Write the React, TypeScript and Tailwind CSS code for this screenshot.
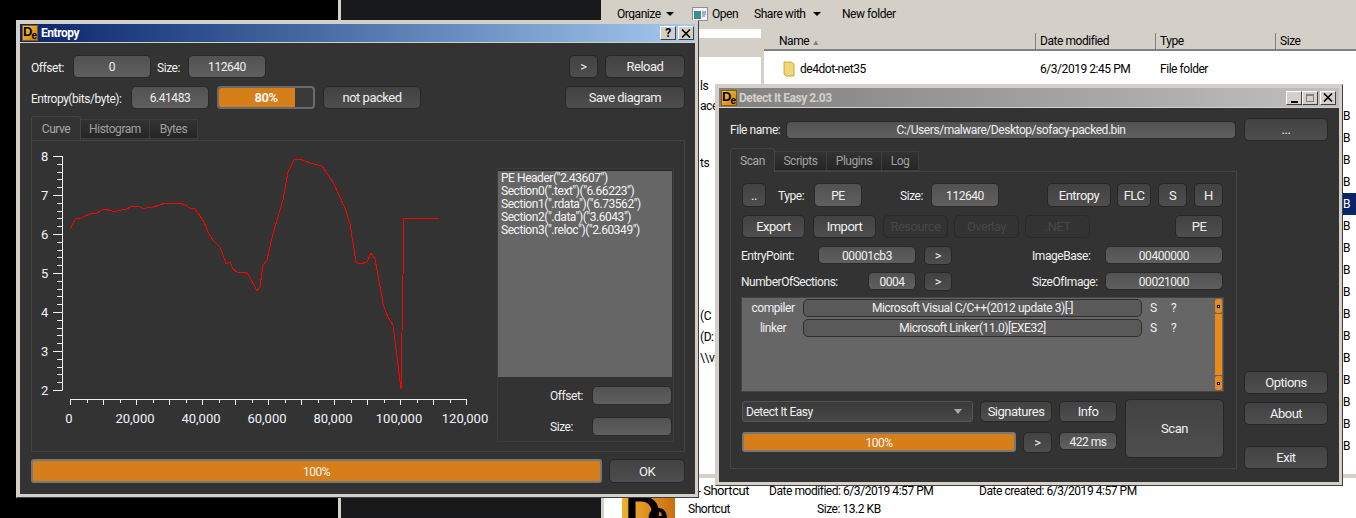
import type { ReactNode } from 'react'

const font = "font-['Roboto','Liberation_Sans',sans-serif] tracking-[-0.45px]"

const curve = [
  [70, 229], [73, 223], [76, 219], [81, 218], [85, 216], [90, 214], [97, 213], [102, 210], [105, 209], [112, 211],
  [117, 211], [122, 210], [127, 209], [130, 207], [137, 206], [140, 207], [144, 209], [148, 207], [153, 207], [160, 205],
  [165, 203], [173, 203], [180, 203], [185, 205], [190, 208], [195, 209], [200, 216], [204, 222], [209, 234], [213, 240],
  [220, 247], [223, 255], [226, 264], [230, 262], [233, 269], [237, 272], [245, 272], [248, 274], [257, 291], [260, 287],
  [263, 265], [267, 260], [272, 238], [277, 220], [283, 200], [288, 172], [294, 160], [300, 159], [310, 163], [322, 166],
  [333, 182], [340, 197], [345, 208], [350, 224], [356, 262], [360, 264], [367, 262], [371, 253], [375, 259], [382, 297],
  [383, 304], [388, 317], [393, 325], [401, 389], [402, 332], [403, 275], [404, 218], [439, 218],
]

function Logo() {
  return (
    <div className="relative h-4 w-4 shrink-0 overflow-hidden border border-[#8a5a10] bg-gradient-to-br from-[#f7c935] to-[#d07a10] font-['Liberation_Sans',sans-serif] font-bold tracking-normal text-black">
      <span className="absolute top-[-1px] left-0 text-[13px] leading-none">D</span>
      <span className="absolute right-0 bottom-[-1px] text-[10px] leading-none">e</span>
    </div>
  )
}

function BigLogo() {
  return (
    <div className="relative h-[60px] w-[53px] shrink-0 overflow-hidden bg-gradient-to-r from-[#f0b030] to-[#c96e12] font-['Liberation_Sans',sans-serif] font-bold tracking-normal text-black">
      <span className="absolute top-[-8px] left-[3px] text-[50px] leading-none">D</span>
      <span className="absolute top-0 left-[25px] text-[38px] leading-none">e</span>
    </div>
  )
}

function Btn({ className = '', children, off }: { className?: string; children?: ReactNode; off?: boolean }) {
  return (
    <div className={`flex shrink-0 items-center justify-center rounded-[5px] border pt-[1px] text-[13px] tracking-[-0.5px] whitespace-nowrap ${off
      ? 'border-[#2a2a2a] bg-[#333333] text-[#474747]'
      : 'border-[#272727] bg-gradient-to-b from-[#424242] to-[#4e4e4e] text-[#f0f0f0]'} ${className}`}>
      {children}
    </div>
  )
}

function Field({ className = '', children }: { className?: string; children?: ReactNode }) {
  return (
    <div className={`flex shrink-0 items-center justify-center rounded-[5px] border border-[#2a2a2a] bg-gradient-to-b from-[#525252] to-[#5f5f5f] pt-[1px] text-[12px] whitespace-nowrap text-[#f0f0f0] ${className}`}>
      {children}
    </div>
  )
}

function Label({ className = '', children }: { className?: string; children: ReactNode }) {
  return <span className={`shrink-0 whitespace-nowrap ${className}`}>{children}</span>
}

function Bar({ className = '', pct = '100%' }: { className?: string; pct?: string }) {
  return (
    <div className={`flex shrink-0 items-center justify-center rounded-[3px] border-2 border-[#777777] bg-[#d67e19] pt-[1px] text-[12px] text-[#f5f5f5] ${className}`}>
      {pct}
    </div>
  )
}

function Tab({ label, active, className = '' }: { label: string; active?: boolean; className?: string }) {
  return (
    <div className={active
      ? `flex h-6 items-center justify-center rounded-t-[3px] border border-b-0 border-[#444444] bg-[#333333] text-[12px] text-[#aaaaaa] ${className}`
      : `mt-[3px] flex h-[20px] items-center justify-center border border-l-0 border-[#3e3e3e] bg-gradient-to-b from-[#333333] to-[#252525] text-[12px] text-[#a0a0a0] ${className}`}>
      {label}
    </div>
  )
}

function CapBtn({ children, className = '' }: { children: ReactNode; className?: string }) {
  return (
    <div className={`flex h-[14px] w-4 items-center justify-center border border-t-white border-l-white border-r-[#404040] border-b-[#404040] bg-[#d4d0c8] ${className}`}>
      {children}
    </div>
  )
}

function CloseGlyph() {
  return (
    <svg viewBox="0 0 10 9" className="h-[9px] w-[10px]" stroke="black" strokeWidth="1.6" fill="none">
      <path d="M1 0.5 9 8.5M9 0.5 1 8.5" />
    </svg>
  )
}

function Chart() {
  const yTicks = Array.from({ length: 31 }, (_, i) => i)
  const xTicks = Array.from({ length: 25 }, (_, i) => i)
  return (
    <svg viewBox="32 141 465 310" className="h-[310px] w-[465px] shrink-0 tracking-normal">
      <path d="M62.5 156V390.5" stroke="#f0f0f0" fill="none" />
      {yTicks.map(i => {
        const y = Math.round(156 + i * 7.8) + 0.5
        return <path key={i} d={`M${i % 5 === 0 ? 53 : 57} ${y}H62`} stroke="#f0f0f0" />
      })}
      {[8, 7, 6, 5, 4, 3, 2].map((n, i) => (
        <text key={n} x="41" y={161 + i * 39} fontSize="13" fill="#f0f4ff">{n}</text>
      ))}
      <path d="M70 399.5H466.5" stroke="#f0f0f0" />
      {xTicks.map(i => {
        const x = Math.round(70 + i * 16.5) + 0.5
        return <path key={i} d={`M${x} 399V${i % 2 === 0 ? 405 : 403}`} stroke="#f0f0f0" />
      })}
      {['0', '20,000', '40,000', '60,000', '80,000', '100,000', '120,000'].map((t, i) => (
        <text key={t} x={69 + i * 66} y="423" fontSize="13" textAnchor="middle" fill="#f0f4ff">{t}</text>
      ))}
      <polyline points={curve.map(p => p.join(',')).join(' ')} fill="none" stroke="#ff0000" strokeWidth="1" shapeRendering="crispEdges" />
    </svg>
  )
}

function EntropyWindow() {
  const sections = [
    'PE Header("2.43607")',
    'Section0(".text")("6.66223")',
    'Section1(".rdata")("6.73562")',
    'Section2(".data")("3.6043")',
    'Section3(".reloc")("2.60349")',
  ]
  return (
    <div className="absolute top-5 left-4 h-[478px] w-[683px] border border-[#d4d0c8] border-r-[#404040] border-b-[#404040] bg-[#d4d0c8] p-[3px]">
      <div className="flex h-[18px] items-center bg-gradient-to-r from-[#0a246a] to-[#a6caf0] pr-[1px] pl-[2px]">
        <Logo />
        <span className="ml-[3px] text-[12px] font-bold text-white">Entropy</span>
        <div className="ml-auto flex gap-[2px]">
          <CapBtn><span className="text-[12px] leading-none font-bold text-black">?</span></CapBtn>
          <CapBtn><CloseGlyph /></CapBtn>
        </div>
      </div>
      <div className="mt-[1px] h-[451px] bg-[#333333] pt-3 pr-[10px] pl-[11px] text-[12px] text-[#f0f0f0]">
        <div className="flex h-[23px] items-center">
          <Label className="w-[42px] pt-[2px]">Offset:</Label>
          <Field className="h-[23px] w-[78px]">0</Field>
          <Label className="ml-[6px] w-[31px] pt-[2px]">Size:</Label>
          <Field className="h-[23px] w-[78px]">112640</Field>
          <Btn className="ml-auto h-[23px] w-[29px]">&gt;</Btn>
          <Btn className="ml-[7px] h-[23px] w-[80px]">Reload</Btn>
        </div>
        <div className="mt-2 flex h-[23px] items-center">
          <Label className="w-[100px] pt-[2px]">Entropy(bits/byte):</Label>
          <Field className="h-[23px] w-[78px]">6.41483</Field>
          <div className="relative ml-2 flex h-[23px] w-[98px] overflow-hidden rounded-[4px] border-2 border-[#6a6a6a] bg-[#3a3a3a]">
            <div className="w-[76px] bg-[#d67e19]" />
            <span className="absolute inset-0 flex items-center justify-center text-[13px] font-bold text-[#f5f5f5]">80%</span>
          </div>
          <Btn className="ml-2 h-[23px] w-[98px] text-[12px]">not packed</Btn>
          <Btn className="ml-auto h-[23px] w-[120px]">Save diagram</Btn>
        </div>
        <div className="mt-[7px] flex h-6">
          <Tab label="Curve" active className="w-[50px]" />
          <Tab label="Histogram" className="w-[69px]" />
          <Tab label="Bytes" className="w-[48px]" />
        </div>
        <div className="flex h-[312px] border border-[#444444]">
          <Chart />
          <div className="mt-[27px] h-[274px] w-[177px] border border-[#3c3c3c]">
            <div className="mt-[1px] h-[207px] w-[174px] border-t border-[#2a2a2a] bg-[#666666] pt-[1px] pl-[3px] text-[12px] leading-[13px] text-[#f5f5f5]">
              {sections.map(s => <div key={s}>{s}</div>)}
            </div>
            <div className="mt-[9px] flex h-[19px] w-[174px] items-center justify-between pl-[52px]">
              <span>Offset:</span>
              <Field className="h-[19px] w-[80px]" />
            </div>
            <div className="mt-3 flex h-[19px] w-[174px] items-center justify-between pl-[52px]">
              <span>Size:</span>
              <Field className="h-[19px] w-[80px]" />
            </div>
          </div>
        </div>
        <div className="mt-[7px] flex h-6 justify-between">
          <Bar className="h-6 w-[571px]" />
          <Btn className="h-6 w-[76px]">OK</Btn>
        </div>
      </div>
    </div>
  )
}

function ScrollCap() {
  return (
    <div className="flex h-[14px] w-[7px] items-center justify-center rounded-[2px] bg-[#e8891c]">
      <div className="h-[3px] w-[3px] border border-black bg-white" />
    </div>
  )
}

function DetectRow({ name, value }: { name: string; value: string }) {
  return (
    <div className="flex h-[18px] items-center text-[12px] text-[#f0f0f0]">
      <span className="w-[60px] text-center">{name}</span>
      <div className="flex h-[18px] w-[339px] items-center justify-center rounded-[5px] border border-[#2e2e2e] bg-[#595959]">{value}</div>
      <span className="ml-2 w-[21px]">S</span>
      <span>?</span>
    </div>
  )
}

function DieWindow() {
  return (
    <div className="absolute top-[84px] left-[715px] h-[402px] w-[628px] border border-[#d4d0c8] border-r-[#404040] border-b-[#404040] bg-[#d4d0c8] p-[3px]">
      <div className="flex h-[19px] items-center bg-gradient-to-r from-[#808080] to-[#c0c0c0] pr-[3px] pl-[2px]">
        <Logo />
        <span className="ml-[2px] text-[12px] font-bold text-[#d4d0c8]">Detect It Easy 2.03</span>
        <div className="ml-auto flex">
          <CapBtn className="items-end pb-[1px]"><div className="h-[2px] w-[7px] bg-black" /></CapBtn>
          <CapBtn><div className="h-2 w-2 border border-t-2 border-[#808080]" /></CapBtn>
          <CapBtn className="ml-[2px]"><CloseGlyph /></CapBtn>
        </div>
      </div>
      <div className="mt-[1px] flex h-[374px] bg-[#333333] pt-[10px] pl-[11px] text-[12px] text-[#f0f0f0]">
        <div className="w-[507px]">
          <div className="flex h-[23px] items-center">
            <Label className="w-[56px]">File name:</Label>
            <Field className="h-[18px] w-[450px]">C:/Users/malware/Desktop/sofacy-packed.bin</Field>
          </div>
          <div className="mt-[6px] flex h-6 pt-[1px]">
            <Tab label="Scan" active className="w-[45px]" />
            <Tab label="Scripts" className="w-[52px]" />
            <Tab label="Plugins" className="w-[55px]" />
            <Tab label="Log" className="w-[37px]" />
          </div>
          <div className="h-[298px] border border-[#444444] pt-[11px] pl-[11px]">
            <div className="flex h-6 items-center">
              <Btn className="h-6 w-6">..</Btn>
              <Label className="ml-3 w-9 pt-[2px]">Type:</Label>
              <Field className="h-6 w-12">PE</Field>
              <Label className="ml-[38px] w-[31px] pt-[2px]">Size:</Label>
              <Field className="h-6 w-[68px]">112640</Field>
              <Btn className="ml-12 h-6 w-16">Entropy</Btn>
              <Btn className="ml-[6px] h-6 w-[34px]">FLC</Btn>
              <Btn className="ml-[7px] h-6 w-[29px]">S</Btn>
              <Btn className="ml-[7px] h-6 w-[29px]">H</Btn>
            </div>
            <div className="mt-2 flex h-[23px]">
              <Btn className="w-[63px]">Export</Btn>
              <Btn className="ml-2 w-[63px]">Import</Btn>
              <Btn off className="ml-[7px] w-[65px]">Resource</Btn>
              <Btn off className="ml-[6px] w-[65px]">Overlay</Btn>
              <Btn off className="ml-[6px] w-[65px]">.NET</Btn>
              <Btn className="ml-[85px] w-12">PE</Btn>
            </div>
            <div className="mt-2 flex h-[19px] items-start">
              <Label className="ml-[-1px] w-[77px] pt-[1px]">EntryPoint:</Label>
              <Field className="h-[18px] w-[98px]">00001cb3</Field>
              <Btn className="ml-2 h-[19px] w-7">&gt;</Btn>
              <Label className="ml-20 w-[73px] pt-[1px]">ImageBase:</Label>
              <Field className="h-[18px] w-[118px]">00400000</Field>
            </div>
            <div className="mt-[7px] flex h-[19px] items-start">
              <Label className="ml-[-1px] w-[127px] pt-[1px]">NumberOfSections:</Label>
              <Field className="h-[18px] w-12">0004</Field>
              <Btn className="ml-2 h-[19px] w-7">&gt;</Btn>
              <Label className="ml-20 w-[73px] pt-[1px]">SizeOfImage:</Label>
              <Field className="h-[18px] w-[118px]">00021000</Field>
            </div>
            <div className="mt-[6px] ml-[-1px] flex h-[95px] w-[483px] justify-between border border-[#444444] bg-[#666666] pt-[1px] pl-[1px]">
              <div className="flex flex-col gap-[2px]">
                <DetectRow name="compiler" value="Microsoft Visual C/C++(2012 update 3)[-]" />
                <DetectRow name="linker" value="Microsoft Linker(11.0)[EXE32]" />
              </div>
              <div className="mr-[1px] flex flex-col gap-[1px]">
                <ScrollCap />
                <div className="h-[61px] w-[7px] bg-[#e8891c]" />
                <ScrollCap />
              </div>
            </div>
            <div className="mt-[7px] flex">
              <div className="w-[375px] pt-[2px]">
                <div className="flex h-[21px]">
                  <div className="flex w-[231px] items-center justify-between rounded-[3px] border border-[#555555] bg-gradient-to-b from-[#3a3a3a] to-[#484848] pr-[10px] pl-[3px]">
                    <span>Detect It Easy</span>
                    <svg viewBox="0 0 8 5" className="h-[5px] w-2"><path d="M0 0H8L4 5Z" fill="#a8a8a8" /></svg>
                  </div>
                  <Btn className="ml-[7px] w-[72px]">Signatures</Btn>
                  <Btn className="ml-[7px] w-[58px]">Info</Btn>
                </div>
                <div className="mt-[10px] flex">
                  <Bar className="h-5 w-[274px]" />
                  <Btn className="ml-[7px] h-[21px] w-[29px]">&gt;</Btn>
                  <Field className="ml-[7px] h-[18px] w-[58px]">422 ms</Field>
                </div>
              </div>
              <Btn className="ml-2 h-[59px] w-[99px]">Scan</Btn>
            </div>
          </div>
        </div>
        <div className="ml-[7px] w-[84px]">
          <Btn className="h-[23px] w-[84px]">...</Btn>
          <Btn className="mt-[230px] h-[23px] w-[84px]">Options</Btn>
          <Btn className="mt-2 h-[23px] w-[84px]">About</Btn>
          <Btn className="mt-[21px] h-[23px] w-[84px]">Exit</Btn>
        </div>
      </div>
    </div>
  )
}

function Explorer() {
  const sizeRows = Array.from({ length: 16 }, (_, i) => i)
  return (
    <div className="flex h-[518px] min-w-0 flex-1 flex-col overflow-hidden border-l-[3px] border-[#d4d0c8] bg-white text-[12px] text-black">
      <div className="flex h-[29px] shrink-0 items-center bg-[#d4d0c8] pb-[1px] pl-[13px] whitespace-nowrap">
        <span className="w-[46px]">Organize</span>
        <svg viewBox="0 0 8 4" className="ml-[3px] h-1 w-2"><path d="M0 0H8L4 4Z" fill="black" /></svg>
        <svg viewBox="0 0 16 14" className="ml-[18px] h-[14px] w-4">
          <rect x="0.5" y="0.5" width="15" height="13" fill="#f4f4f4" stroke="#8a8f98" />
          <rect x="2" y="4" width="7" height="8" fill="#3e8c8c" />
          <path d="M10 5H14M10 7H14M10 9H13" stroke="#5070a0" />
        </svg>
        <span className="ml-1 w-[26px]">Open</span>
        <span className="ml-4 w-[55px]">Share with</span>
        <svg viewBox="0 0 8 4" className="ml-1 h-1 w-2"><path d="M0 0H8L4 4Z" fill="black" /></svg>
        <span className="ml-[21px]">New folder</span>
      </div>
      <div className="flex min-h-0 flex-1">
        <div className="w-[157px] shrink-0 bg-white">
          <div className="mt-[9px] h-[19px] bg-[#d4d0c8]" />
          <div className="mt-[20px] pl-[96px]">ls</div>
          <div className="mt-[2px] pl-[96px]">ace</div>
          <div className="mt-[39px] pl-[96px]">ts</div>
          <div className="mt-[135px] pl-[96px]">(C</div>
          <div className="mt-[3px] pl-[96px]">(D:</div>
          <div className="mt-[3px] pl-[96px]">\\vl</div>
        </div>
        <div className="w-[3px] shrink-0 bg-[#d4d0c8]" />
        <div className="min-w-0 flex-1">
          <div className="flex h-[22px] border-b-2 border-[#808080] bg-[#d4d0c8] pt-1">
            <div className="w-[272px] border-r border-[#808080] pl-[15px] leading-[17px]">Name <span className="text-[8px] text-[#808080]">▲</span></div>
            <div className="w-[120px] border-r border-[#808080] pl-[4px] leading-[17px]">Date modified</div>
            <div className="w-[120px] border-r border-[#808080] pl-[4px] leading-[17px]">Type</div>
            <div className="pl-[4px] leading-[17px]">Size</div>
          </div>
          <div className="relative">
            <div className="mt-[9px] flex h-[17px] items-center">
              <svg viewBox="0 0 12 16" className="ml-[19px] h-4 w-3"><path d="M1 1H8L11 3V15H3L1 13Z" fill="#f2d675" stroke="#c8a840" /></svg>
              <span className="ml-[5px] w-[240px]">de4dot-net35</span>
              <span className="w-[120px]">6/3/2019 2:45 PM</span>
              <span>File folder</span>
            </div>
            <div className="absolute top-[45px] right-0 flex w-[14px] flex-col">
              {sizeRows.map(i => (
                <div key={i} className={`h-[22px] pl-[1px] leading-[22px] ${i === 4 ? 'bg-[#0a246a] text-white' : ''}`}>B</div>
              ))}
            </div>
          </div>
        </div>
      </div>
      <div className="h-[4px] shrink-0 bg-[#d4d0c8]" />
      <div className="flex h-[40px] shrink-0 pt-[19px] pl-[18px]">
        <BigLogo />
        <div className="ml-[13px] flex flex-col leading-[18px]">
          <div className="-mt-[15px] flex">
            <span className="w-[81px] text-[13px] whitespace-nowrap">e - Shortcut</span>
            <span className="w-[210px] whitespace-nowrap">Date modified: 6/3/2019 4:57 PM</span>
            <span className="whitespace-nowrap">Date created: 6/3/2019 4:57 PM</span>
          </div>
          <div className="flex">
            <span className="w-[129px]">Shortcut</span>
            <span className="whitespace-nowrap">Size: 13.2 KB</span>
          </div>
        </div>
      </div>
    </div>
  )
}

export default function App() {
  return (
    <div className={`relative flex h-[518px] w-[1356px] overflow-hidden bg-black ${font}`}>
      <div className="w-[338px] shrink-0 bg-black" />
      <div className="w-[3px] shrink-0 bg-[#d4d0c8]" />
      <div className="w-[260px] shrink-0 bg-[#18191b]" />
      <Explorer />
      <EntropyWindow />
      <DieWindow />
    </div>
  )
}
